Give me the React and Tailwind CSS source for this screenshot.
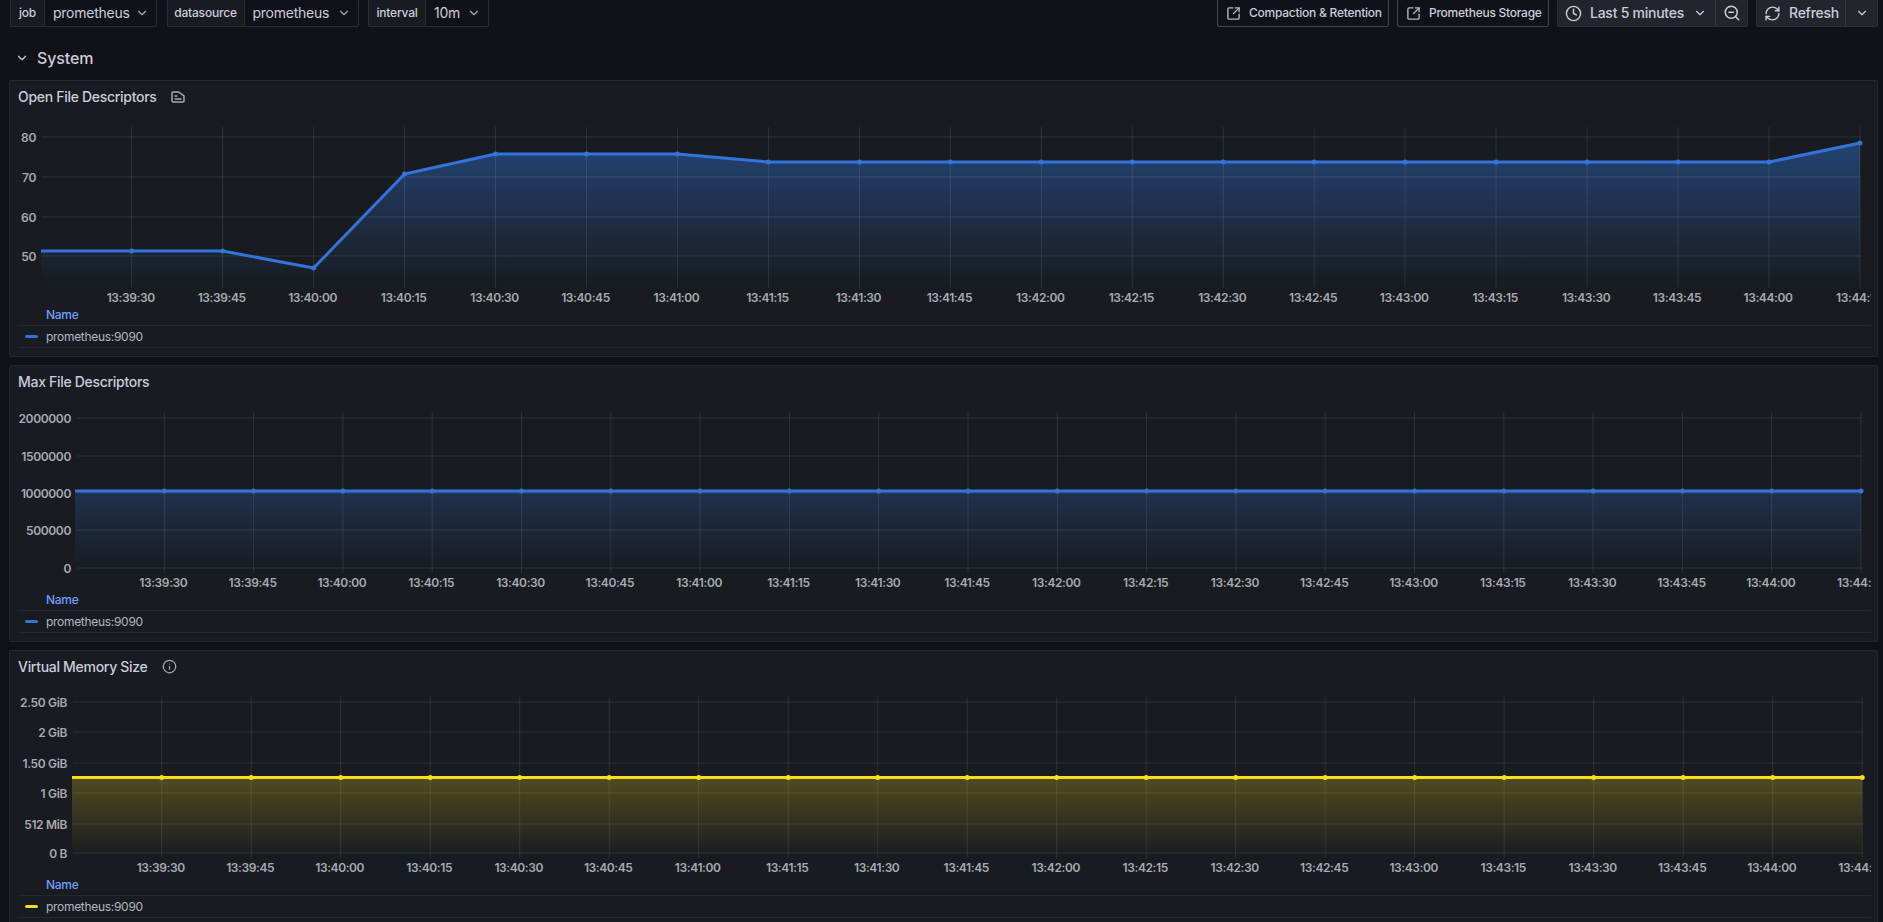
import React from "react";
import { ChevronDown, Clock, SquareArrowOutUpRight, RefreshCw, ZoomOut, Info } from "lucide-react";

const FONT = "font-['Inter',sans-serif]";
const ticks = [
  "13:39:30", "13:39:45", "13:40:00", "13:40:15", "13:40:30", "13:40:45", "13:41:00",
  "13:41:15", "13:41:30", "13:41:45", "13:42:00", "13:42:15", "13:42:30", "13:42:45",
  "13:43:00", "13:43:15", "13:43:30", "13:43:45", "13:44:00", "13:44:15",
];

// all chart numbers below are page x and y relative to the panel top
const charts = [
  {
    id: "open",
    color: "#3274d9",
    rgb: "50,116,217",
    startX: 41,
    firstTick: 131.7,
    step: 90.96,
    labelRight: 36,
    gridStart: 42,
    yTicks: [["80", 57], ["70", 97], ["60", 137], ["50", 176]],
    points: [171, 171, 171, 188, 94, 74, 74, 74, 82, 82, 82, 82, 82, 82, 82, 82, 82, 82, 82, 82, 63],
  },
  {
    id: "max",
    color: "#3274d9",
    rgb: "50,116,217",
    startX: 75,
    firstTick: 164.3,
    step: 89.3,
    labelRight: 71,
    gridStart: 77,
    yTicks: [["2000000", 53], ["1500000", 91], ["1000000", 128], ["500000", 165], ["0", 203]],
    points: Array(21).fill(126),
  },
  {
    id: "mem",
    color: "#fadc20",
    rgb: "250,220,32",
    startX: 72,
    firstTick: 161.7,
    step: 89.5,
    labelRight: 67,
    gridStart: 73,
    yTicks: [["2.50 GiB", 52], ["2 GiB", 82], ["1.50 GiB", 113], ["1 GiB", 143], ["512 MiB", 174], ["0 B", 203]],
    points: Array(21).fill(127.5),
  },
];

const SVG_X = 18; // left edge of the chart svg on the page
const SVG_Y = 32; // top of the chart svg within the panel

function Chart({ c }) {
  const plotTop = 47;
  const plotBottom = 208;
  const endX = c.firstTick + c.step * 19;
  const xs = [c.startX, ...ticks.map((_, i) => c.firstTick + c.step * i)];
  const line = xs.map((x, i) => `${i === 0 ? "M" : "L"}${x - SVG_X} ${c.points[i] - SVG_Y}`).join(" ");
  const area = `${line} L${endX - SVG_X} ${plotBottom - SVG_Y} L${c.startX - SVG_X} ${plotBottom - SVG_Y} Z`;

  return (
    <svg width="1853" height="193" className="block shrink-0">
      <defs>
        <linearGradient id={c.id} gradientUnits="userSpaceOnUse" x1="0" y1={plotTop - SVG_Y} x2="0" y2={plotBottom - SVG_Y}>
          <stop offset="0" stopColor={`rgb(${c.rgb})`} stopOpacity="0.5" />
          <stop offset="1" stopColor={`rgb(${c.rgb})`} stopOpacity="0" />
        </linearGradient>
      </defs>
      <path d={area} fill={`url(#${c.id})`} />
      {c.yTicks.map(([label, y]) => (
        <g key={label}>
          <line x1={c.gridStart - SVG_X} x2={endX + 1 - SVG_X} y1={y - SVG_Y} y2={y - SVG_Y} stroke="rgba(204,204,220,0.12)" />
          <text x={c.labelRight - SVG_X} y={y - SVG_Y + 4.5} textAnchor="end" fontSize="12" fontWeight="600" fill="#a8a9b2" fontFamily="Inter, sans-serif" className="tracking-[-0.35px]">
            {label}
          </text>
        </g>
      ))}
      {ticks.map((t, i) => {
        const x = c.firstTick + c.step * i - SVG_X;
        return (
          <g key={t}>
            <line x1={x} x2={x} y1={plotTop - SVG_Y} y2={plotBottom - SVG_Y} stroke="rgba(204,204,220,0.12)" />
            <text x={x - 1} y={218 - SVG_Y + 4} textAnchor="middle" fontSize="12" fontWeight="600" fill="#a8a9b2" fontFamily="Inter, sans-serif" className="tracking-[-0.4px]">
              {t}
            </text>
          </g>
        );
      })}
      <path d={line} fill="none" stroke={c.color} strokeWidth="3" strokeLinejoin="round" />
      {xs.slice(1).map((x, i) => (
        <circle key={i} cx={x - SVG_X} cy={c.points[i + 1] - SVG_Y} r="2.5" fill={c.color} />
      ))}
    </svg>
  );
}

function DescIcon() {
  return (
    <svg width="14" height="14" viewBox="0 0 14 14" fill="none" stroke="#a8a9b2" strokeWidth="1.5" className="ml-[14px]">
      <path d="M1 11V3a1 1 0 0 1 1-1h5.5L13 6v5a1 1 0 0 1-1 1H2a1 1 0 0 1-1-1z" />
      <path d="M3.5 6h3M3.5 9h7" />
    </svg>
  );
}

function Panel({ title, icon, chart, legendColor }) {
  return (
    <div className="flex h-[277px] w-[1869px] flex-col rounded-[2px] border border-[#24272c] bg-[#181b1f] pl-2 pr-[6px]">
      <div className="flex h-[31px] shrink-0 items-center">
        <span className="text-sm font-medium tracking-[-0.3px] text-[#ccccdc]">{title}</span>
        {icon}
      </div>
      <Chart c={chart} />
      <div className="flex h-[21px] shrink-0 items-center border-b border-[#24272c] pl-[28px] text-xs font-medium tracking-[-0.3px] text-[#6e9fff]">
        Name
      </div>
      <div className="flex h-[22px] shrink-0 items-center border-b border-[#24272c] pl-[7px] text-xs tracking-[-0.3px] text-[#b5b6c0]">
        <span className="mr-2 h-[3px] w-[13px] rounded-full" style={{ backgroundColor: legendColor }} />
        prometheus:9090
      </div>
    </div>
  );
}

function VarPicker({ label, value, labelWidth, valueWidth }) {
  return (
    <div className="flex h-7 items-stretch">
      <div className={`flex items-center justify-center rounded-l-[2px] border border-r-0 border-[#2a2d32] bg-[#181b1f] text-xs font-medium tracking-[-0.2px] text-[#ccccdc] ${labelWidth}`}>
        {label}
      </div>
      <div className={`flex items-center justify-between rounded-r-[2px] border border-[#2a2d32] bg-[#111217] pl-2 pr-[7px] text-sm tracking-[-0.25px] text-[#ccccdc] ${valueWidth}`}>
        <span>{value}</span>
        <ChevronDown size={14} className="text-[#a8a9b2]" />
      </div>
    </div>
  );
}

function LinkButton({ label, width }) {
  return (
    <div className={`flex h-7 items-center rounded-[2px] border border-[#44474d] bg-[#111217] pl-2 text-xs font-medium tracking-[-0.25px] text-[#ccccdc] ${width}`}>
      <SquareArrowOutUpRight size={15} strokeWidth={2.2} className="mr-[8px] text-[#b5b6c0]" />
      {label}
    </div>
  );
}

export default function App() {
  return (
    <div className={`h-[922px] w-[1883px] overflow-hidden bg-[#111217] ${FONT}`}>
      <div className="-mt-px flex items-center pl-[10px] pr-[5px]">
        <div className="flex gap-[9.5px]">
          <VarPicker label="job" value="prometheus" labelWidth="w-[34px]" valueWidth="w-[113px]" />
          <VarPicker label="datasource" value="prometheus" labelWidth="w-[77px]" valueWidth="w-[115px]" />
          <VarPicker label="interval" value="10m" labelWidth="w-[57px]" valueWidth="w-[64px]" />
        </div>
        <div className="ml-auto flex gap-2">
          <LinkButton label="Compaction & Retention" width="w-[172px]" />
          <LinkButton label="Prometheus Storage" width="w-[152px]" />
          <div className="flex h-7 items-stretch rounded-[2px] border border-[#2c2e33] bg-[#22252b] text-sm font-medium tracking-[-0.25px] text-[#ccccdc]">
            <div className="flex w-[158px] items-center border-r border-[#33363b] pl-[7px]">
              <Clock size={17} className="mr-[8px]" />
              Last 5 minutes
              <ChevronDown size={14} className="ml-[9px]" />
            </div>
            <div className="flex w-[31px] items-center justify-center">
              <ZoomOut size={18} />
            </div>
          </div>
          <div className="flex h-7 items-stretch rounded-[2px] border border-[#2c2e33] bg-[#22252b] text-sm font-medium tracking-[-0.25px] text-[#ccccdc]">
            <div className="flex w-[89px] items-center border-r border-[#33363b] pl-[7px]">
              <RefreshCw size={17} className="mr-[8px]" />
              Refresh
            </div>
            <div className="flex w-[31px] items-center justify-center">
              <ChevronDown size={14} />
            </div>
          </div>
        </div>
      </div>

      <div className="mt-[18px] flex h-[26px] items-center pl-[15px] text-base font-medium tracking-[-0.1px] text-[#ccccdc]">
        <ChevronDown size={14} className="mr-[8px]" />
        System
      </div>

      <div className="ml-[9px] mt-[9px] flex flex-col gap-2">
        <Panel title="Open File Descriptors" icon={<DescIcon />} chart={charts[0]} legendColor="#3274d9" />
        <Panel title="Max File Descriptors" chart={charts[1]} legendColor="#3274d9" />
        <Panel
          title="Virtual Memory Size"
          icon={<Info size={15} className="ml-[14px] text-[#a8a9b2]" />}
          chart={charts[2]}
          legendColor="#fadc20"
        />
      </div>
    </div>
  );
}
